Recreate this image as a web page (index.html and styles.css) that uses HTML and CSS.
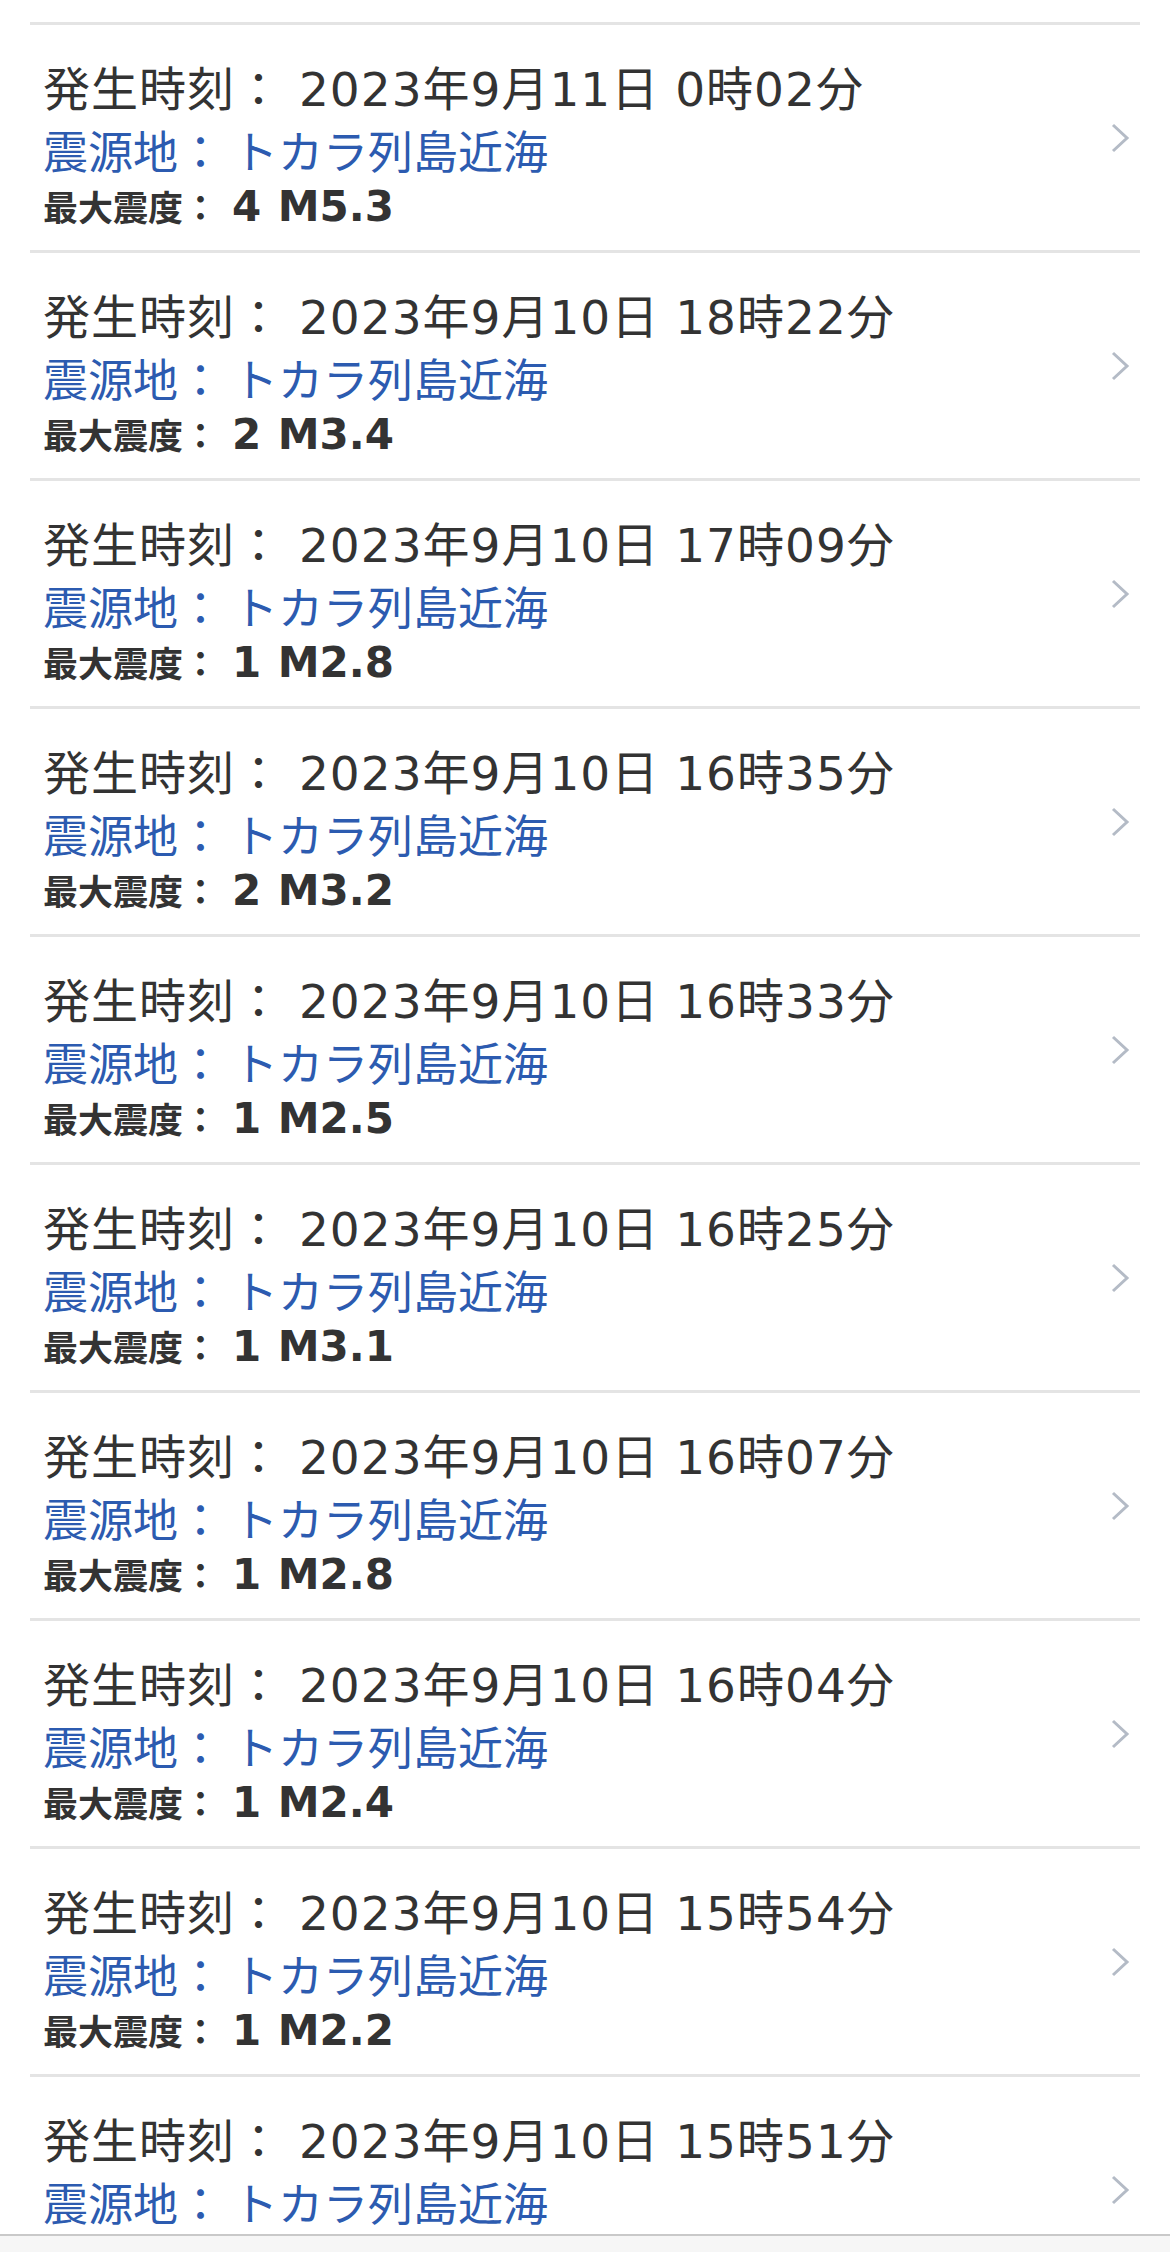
FILE: index.html
```html
<!DOCTYPE html>
<html lang="ja">
<head>
    <meta charset="UTF-8">
    <meta name="viewport" content="width=device-width, initial-scale=1.0">
    <title>地震情報</title>
    <link rel="stylesheet" href="styles.css">
</head>
<body>
    <div class="list">
        <a class="quake-item" href="#">
            <div class="quake-info">
                <div class="quake-time">発生時刻： 2023年9月11日 0時02分</div>
                <div class="quake-place">震源地： トカラ列島近海</div>
                <div class="quake-scale">最大震度： <span class="quake-value">4 M5.3</span></div>
            </div>
            <svg class="chevron" viewBox="0 0 20 30"><path d="M3 2 L17 15 L3 28"/></svg>
        </a>
        <a class="quake-item" href="#">
            <div class="quake-info">
                <div class="quake-time">発生時刻： 2023年9月10日 18時22分</div>
                <div class="quake-place">震源地： トカラ列島近海</div>
                <div class="quake-scale">最大震度： <span class="quake-value">2 M3.4</span></div>
            </div>
            <svg class="chevron" viewBox="0 0 20 30"><path d="M3 2 L17 15 L3 28"/></svg>
        </a>
        <a class="quake-item" href="#">
            <div class="quake-info">
                <div class="quake-time">発生時刻： 2023年9月10日 17時09分</div>
                <div class="quake-place">震源地： トカラ列島近海</div>
                <div class="quake-scale">最大震度： <span class="quake-value">1 M2.8</span></div>
            </div>
            <svg class="chevron" viewBox="0 0 20 30"><path d="M3 2 L17 15 L3 28"/></svg>
        </a>
        <a class="quake-item" href="#">
            <div class="quake-info">
                <div class="quake-time">発生時刻： 2023年9月10日 16時35分</div>
                <div class="quake-place">震源地： トカラ列島近海</div>
                <div class="quake-scale">最大震度： <span class="quake-value">2 M3.2</span></div>
            </div>
            <svg class="chevron" viewBox="0 0 20 30"><path d="M3 2 L17 15 L3 28"/></svg>
        </a>
        <a class="quake-item" href="#">
            <div class="quake-info">
                <div class="quake-time">発生時刻： 2023年9月10日 16時33分</div>
                <div class="quake-place">震源地： トカラ列島近海</div>
                <div class="quake-scale">最大震度： <span class="quake-value">1 M2.5</span></div>
            </div>
            <svg class="chevron" viewBox="0 0 20 30"><path d="M3 2 L17 15 L3 28"/></svg>
        </a>
        <a class="quake-item" href="#">
            <div class="quake-info">
                <div class="quake-time">発生時刻： 2023年9月10日 16時25分</div>
                <div class="quake-place">震源地： トカラ列島近海</div>
                <div class="quake-scale">最大震度： <span class="quake-value">1 M3.1</span></div>
            </div>
            <svg class="chevron" viewBox="0 0 20 30"><path d="M3 2 L17 15 L3 28"/></svg>
        </a>
        <a class="quake-item" href="#">
            <div class="quake-info">
                <div class="quake-time">発生時刻： 2023年9月10日 16時07分</div>
                <div class="quake-place">震源地： トカラ列島近海</div>
                <div class="quake-scale">最大震度： <span class="quake-value">1 M2.8</span></div>
            </div>
            <svg class="chevron" viewBox="0 0 20 30"><path d="M3 2 L17 15 L3 28"/></svg>
        </a>
        <a class="quake-item" href="#">
            <div class="quake-info">
                <div class="quake-time">発生時刻： 2023年9月10日 16時04分</div>
                <div class="quake-place">震源地： トカラ列島近海</div>
                <div class="quake-scale">最大震度： <span class="quake-value">1 M2.4</span></div>
            </div>
            <svg class="chevron" viewBox="0 0 20 30"><path d="M3 2 L17 15 L3 28"/></svg>
        </a>
        <a class="quake-item" href="#">
            <div class="quake-info">
                <div class="quake-time">発生時刻： 2023年9月10日 15時54分</div>
                <div class="quake-place">震源地： トカラ列島近海</div>
                <div class="quake-scale">最大震度： <span class="quake-value">1 M2.2</span></div>
            </div>
            <svg class="chevron" viewBox="0 0 20 30"><path d="M3 2 L17 15 L3 28"/></svg>
        </a>
        <a class="quake-item" href="#">
            <div class="quake-info">
                <div class="quake-time">発生時刻： 2023年9月10日 15時51分</div>
                <div class="quake-place">震源地： トカラ列島近海</div>
                <div class="quake-scale">最大震度： <span class="quake-value">1 M2.1</span></div>
            </div>
            <svg class="chevron" viewBox="0 0 20 30"><path d="M3 2 L17 15 L3 28"/></svg>
        </a>
    </div>
    <div class="bottom-bar"></div>
</body>
</html>
```

FILE: styles.css
```css
:root {
    --text-color: #333333;
    --link-color: #2c5bb0;
    --line-color: #e4e4e4;
    --chevron-color: #b4bbc6;
}
* {
    box-sizing: border-box;
    margin: 0;
    padding: 0;
}
body {
    background: #ffffff;
    color: var(--text-color);
    font-family: "Noto Sans CJK JP", "Noto Sans", sans-serif;
    height: 2252px;
    overflow: hidden;
}
.list {
    margin: 22px 30px 0;
    border-top: 3px solid var(--line-color);
}
.quake-item {
    display: flex;
    align-items: center;
    justify-content: space-between;
    height: 228px;
    padding: 0 10px 0 13px;
    border-bottom: 3px solid var(--line-color);
    color: inherit;
    text-decoration: none;
}
.quake-info {
    display: flex;
    flex-direction: column;
    padding-top: 10px;
}
.quake-time {
    font-family: "DejaVu Sans", "Noto Sans CJK JP", sans-serif;
    font-size: 47px;
    line-height: 56px;
    padding-top: 8px;
    letter-spacing: 1px;
}
.quake-place {
    font-size: 45px;
    line-height: 64px;
    color: var(--link-color);
}
.quake-scale {
    font-size: 35px;
    line-height: 48px;
    font-weight: bold;
}
.quake-value {
    font-family: "DejaVu Sans", "Noto Sans CJK JP", sans-serif;
    font-size: 42px;
    margin-left: 6px;
    word-spacing: 2px;
}
.chevron {
    width: 20px;
    height: 30px;
    fill: none;
    stroke: var(--chevron-color);
    stroke-width: 3;
}
.bottom-bar {
    position: fixed;
    left: 0;
    right: 0;
    bottom: 0;
    height: 18px;
    background: #f6f6f6;
    border-top: 2px solid #c9c9c9;
}
```
